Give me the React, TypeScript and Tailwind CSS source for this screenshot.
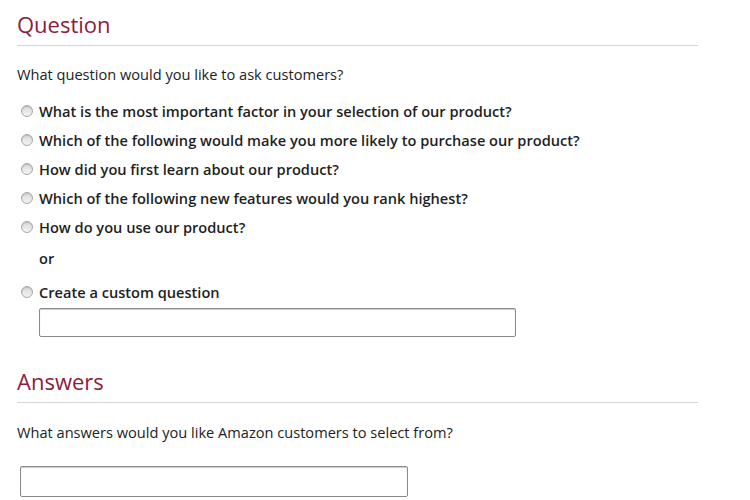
import React from "react";

const Radio = () => (
  <span className="inline-block w-[12px] h-[12px] rounded-full border border-[#a8a8a8] bg-gradient-to-b from-[#d9d9d9] to-[#f4f4f4] shadow-[inset_0_1px_1px_rgba(0,0,0,0.15)] shrink-0" />
);

const options = [
  "What is the most important factor in your selection of our product?",
  "Which of the following would make you more likely to purchase our product?",
  "How did you first learn about our product?",
  "Which of the following new features would you rank highest?",
  "How do you use our product?",
];

export default function App() {
  return (
    <div className="w-[750px] h-[500px] bg-white overflow-hidden pl-[17px] text-[#111]" style={{ fontFamily: '"Open Sans", "Noto Sans", sans-serif' }}>
      <div className="w-[681px]">
        <h1 className="text-[22px] leading-[30px] pt-[9px] text-[#8c1b3c] font-normal">Question</h1>
        <div className="mt-[6px] h-px bg-[#d4d4d4]" />
        <p className="mt-[18px] text-[14.6px] leading-[20px] text-[#222]">What question would you like to ask customers?</p>
        <div className="mt-[17px] flex flex-col gap-[9px]">
          {options.map((o) => (
            <div key={o} className="flex items-center gap-[6px] pl-[4px] h-[20px]">
              <Radio />
              <span className="text-[14.6px] leading-[20px] font-semibold text-[#1e1e1e]">{o}</span>
            </div>
          ))}
        </div>
        <p className="mt-[11px] pl-[22px] text-[14.6px] leading-[20px] font-semibold text-[#1e1e1e]">or</p>
        <div className="mt-[14px] flex items-center gap-[6px] pl-[4px] h-[20px]">
          <Radio />
          <span className="text-[14.6px] leading-[20px] font-semibold text-[#1e1e1e]">Create a custom question</span>
        </div>
        <div className="mt-[6px] ml-[22px] w-[477px] h-[29px] border border-[#8a8a8a] rounded-[2px] shadow-[inset_0_1px_1px_rgba(0,0,0,0.2)]" />
        <h2 className="mt-[29px] text-[22px] leading-[30px] text-[#8c1b3c] font-normal">Answers</h2>
        <div className="mt-[6px] h-px bg-[#d4d4d4]" />
        <p className="mt-[19px] text-[14.6px] leading-[20px] text-[#222]">What answers would you like Amazon customers to select from?</p>
        <div className="mt-[24px] ml-[3px] w-[388px] h-[31px] border border-[#8a8a8a] rounded-[2px] shadow-[inset_0_1px_1px_rgba(0,0,0,0.2)]" />
      </div>
    </div>
  );
}
